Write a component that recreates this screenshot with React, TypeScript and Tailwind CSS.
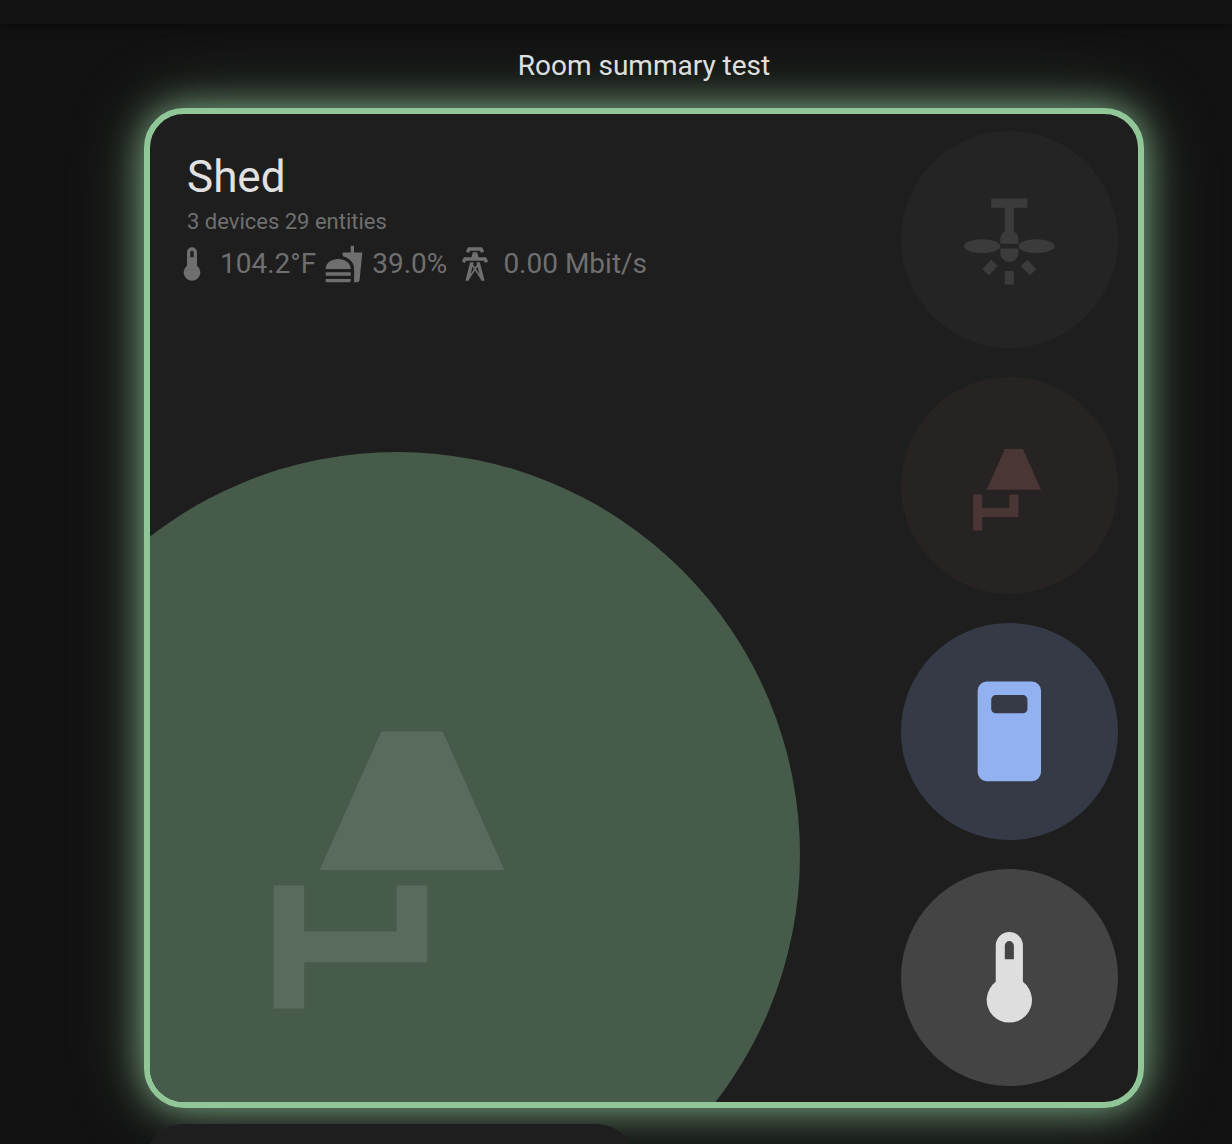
import type { ReactNode } from "react";

const PATHS = {
  thermometer:
    "M15 13V5A3 3 0 0 0 9 5V13A5 5 0 1 0 15 13M12 4A1 1 0 0 1 13 5V8H11V5A1 1 0 0 1 12 4Z",
  fastFood:
    "M18.06 22.99h1.66c.84 0 1.53-.64 1.63-1.46L23 5.05h-5V1h-1.97v4.05h-4.97l.3 2.34c1.71.47 3.31 1.32 4.27 2.26 1.44 1.42 2.43 2.89 2.43 5.29v8.05zM1 21.99V21h15.03v.99c0 .55-.45 1-1.01 1H2.01c-.56 0-1.01-.45-1.01-1zm15.03-7c0-8-15.03-8-15.03 0h15.03zM1.02 17h15v2h-15z",
  tower:
    "M8.28,5.45L6.5,4.55L7.76,2H16.23L17.5,4.55L15.72,5.44L15,4H9L8.28,5.45M18.62,8H14.09L13.3,5H10.7L9.91,8H5.38L4.1,10.55L5.89,11.44L6.62,10H17.38L18.1,11.45L19.89,10.56L18.62,8M17.77,22H15.7L15.46,21.1L12,15.9L8.53,21.1L8.3,22H6.23L9.12,11H11.19L10.83,12.35L12,14.1L13.16,12.35L12.81,11H14.88L17.77,22M11.4,15L10.5,13.65L9.32,18.13L11.4,15M14.68,18.12L13.5,13.64L12.6,15L14.68,18.12Z",
  ceilingFan:
    "M8 3h8v2h-3v5.27A2 2 0 0 1 14 12v1h-4v-1a2 2 0 0 1 1-1.73V5H8zM10 14h4v1a2 2 0 0 1-4 0zM2 13.5C2 12.67 3.79 12 6 12s4 .67 4 1.5S8.21 15 6 15s-4-.67-4-1.5M14 13.5c0-.83 1.79-1.5 4-1.5s4 .67 4 1.5-1.79 1.5-4 1.5-4-.67-4-1.5M11 19h2v3h-2zM8 16.5l1.45 1.4-2 2.1-1.4-1.45zM16 16.5l-1.45 1.4 2 2.1 1.4-1.45z",
  sconce: "M7 13L11 4H15L19 13ZM4 14H6V17H12V14H14V19H6V22H4Z",
  fridge:
    "M7 1H17A2 2 0 0 1 19 3V21A2 2 0 0 1 17 23H7A2 2 0 0 1 5 21V3A2 2 0 0 1 7 1M9 4A1 1 0 0 0 8 5V7A1 1 0 0 0 9 8H15A1 1 0 0 0 16 7V5A1 1 0 0 0 15 4Z",
};

function Icon({ name, className }: { name: keyof typeof PATHS; className: string }) {
  return (
    <svg viewBox="0 0 24 24" fill="currentColor" fillRule="evenodd" aria-hidden="true" className={className}>
      <path d={PATHS[name]} />
    </svg>
  );
}

function Sensor({ icon, children }: { icon: keyof typeof PATHS; children: ReactNode }) {
  return (
    <li className="flex items-center gap-2">
      <Icon name={icon} className="size-10" />
      <span>{children}</span>
    </li>
  );
}

const ENTITIES: { label: string; icon: keyof typeof PATHS; tone: string }[] = [
  { label: "Ceiling fan", icon: "ceilingFan", tone: "bg-[#242424] text-[#3b3b3b]" },
  { label: "Wall light", icon: "sconce", tone: "bg-[#272322] text-[#4a3635]" },
  { label: "Fridge", icon: "fridge", tone: "bg-[#353a46] text-[#92b1f1]" },
  { label: "Temperature", icon: "thermometer", tone: "bg-[#444444] text-[#dedede]" },
];

export default function App() {
  return (
    <div className="flex h-screen flex-col overflow-hidden bg-[#121212] font-['Roboto',sans-serif] text-[#e1e1e1]">
      <header className="relative z-10 h-6 shrink-0 bg-[#131313] shadow-[0_2px_10px_rgba(0,0,0,0.5)]" />
      <main className="pr-[88px] pl-36">
        <h1 className="pt-[22px] pb-[22px] text-center text-[28px] leading-10">Room summary test</h1>

        <section className="relative aspect-square overflow-hidden rounded-[40px] border-6 border-[#91c798] bg-[#1e1e1e] shadow-[0_0_36px_rgba(145,199,152,0.75),0_0_72px_rgba(145,199,152,0.35)]">
          <button
            type="button"
            aria-label="Shed lights"
            className="absolute bottom-[-15.8%] left-[-15.8%] flex size-[81.6%] items-center justify-center rounded-full bg-[#475b4a] text-[#596b5c]"
          >
            <Icon name="sconce" className="size-[45.8%]" />
          </button>

          <div className="pointer-events-none relative flex h-full justify-between">
            <div className="pt-9 pl-[22px]">
              <h2 className="pl-[15px] text-[44px] leading-[54px]">Shed</h2>
              <p className="pl-[15px] text-[22px] leading-9 text-[#6f6f6f]">3 devices 29 entities</p>
              <ul className="mt-1 flex gap-2 text-[28px] leading-10 text-[#6f6f6f]">
                <Sensor icon="thermometer">104.2°F</Sensor>
                <Sensor icon="fastFood">39.0%</Sensor>
                <Sensor icon="tower">0.00 Mbit/s</Sensor>
              </ul>
            </div>
            <div className="pointer-events-auto mr-5 flex w-[22%] flex-col justify-between pt-[17px] pb-4">
              {ENTITIES.map((e) => (
                <button
                  key={e.label}
                  type="button"
                  aria-label={e.label}
                  className={`flex aspect-square w-full items-center justify-center rounded-full ${e.tone}`}
                >
                  <Icon name={e.icon} className="size-1/2" />
                </button>
              ))}
            </div>
          </div>
        </section>

        <div className="mt-4 grid grid-cols-2 gap-4">
          <section className="relative h-60 rounded-[40px] bg-[#1e1e1e]" />
        </div>
      </main>
    </div>
  );
}
